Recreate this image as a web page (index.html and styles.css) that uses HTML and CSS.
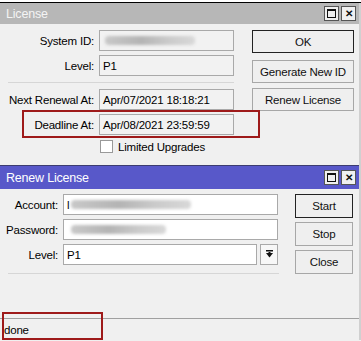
FILE: index.html
```html
<!DOCTYPE html>
<html lang="en">
<head>
    <meta charset="UTF-8">
    <title>License</title>
    <link rel="stylesheet" href="styles.css">
</head>
<body>
    <div class="behind"></div>

    <!-- License window (inactive) -->
    <div class="window">
        <div class="titlebar inactive">
            <span class="title">License</span>
            <span class="tb-buttons">
                <span class="tb-btn"><span class="max-ico"></span></span>
                <span class="tb-btn close-ico">&#x2715;</span>
            </span>
        </div>
        <div class="win-body lic-body">
            <div class="form">
                <div class="row">
                    <label>System ID:</label>
                    <div class="field ro blurred"><span class="blur w90"></span></div>
                </div>
                <div class="row">
                    <label>Level:</label>
                    <div class="field ro">P1</div>
                </div>
                <div class="divider"></div>
                <div class="row">
                    <label>Next Renewal At:</label>
                    <div class="field ro">Apr/07/2021 18:18:21</div>
                </div>
                <div class="row">
                    <label>Deadline At:</label>
                    <div class="field ro">Apr/08/2021 23:59:59</div>
                </div>
                <div class="row check-row">
                    <span class="checkbox"></span>
                    <span>Limited Upgrades</span>
                </div>
            </div>
            <div class="buttons lic-buttons">
                <button class="btn default">OK</button>
                <button class="btn">Generate New ID</button>
                <button class="btn">Renew License</button>
            </div>
            <div class="mark mark-deadline"></div>
        </div>
    </div>

    <!-- Renew License window (active) -->
    <div class="window renew">
        <div class="titlebar active">
            <span class="title">Renew License</span>
            <span class="tb-buttons">
                <span class="tb-btn"><span class="max-ico"></span></span>
                <span class="tb-btn close-ico">&#x2715;</span>
            </span>
        </div>
        <div class="win-body renew-body">
            <div class="form renew-form">
                <div class="row">
                    <label>Account:</label>
                    <div class="field">l<span class="blur w75"></span></div>
                </div>
                <div class="row">
                    <label>Password:</label>
                    <div class="field"><span class="blur w80"></span></div>
                </div>
                <div class="row">
                    <label>Level:</label>
                    <div class="select">
                        <div class="field">P1</div>
                        <span class="drop">
                            <svg width="9" height="9" viewBox="0 0 9 9">
                                <rect x="1" y="0" width="7" height="1.5" fill="#111"/>
                                <polygon points="1,3 8,3 4.5,7.5" fill="#111"/>
                                <rect x="3.5" y="2" width="2" height="3" fill="#111"/>
                            </svg>
                        </span>
                    </div>
                </div>
                <div class="divider"></div>
            </div>
            <div class="buttons renew-buttons">
                <button class="btn default">Start</button>
                <button class="btn">Stop</button>
                <button class="btn">Close</button>
            </div>
        </div>
        <div class="status">
            <span>done</span>
            <div class="mark mark-status"></div>
        </div>
    </div>
</body>
</html>
```

FILE: styles.css
```css
/* Styles */
body {
    margin: 0;
    padding: 0;
    width: 361px;
    height: 341px;
    overflow: hidden;
    background-color: #f0f0f0;
    font-family: "Liberation Sans", Arial, sans-serif;
    font-size: 11.5px;
    letter-spacing: -0.2px;
    color: #000;
}

.behind {
    height: 2px;
    background-color: #fff;
    border-bottom: 1px solid #000;
}

.window {
    position: relative;
    border-right: 2px solid #d0d0d0;
}

.titlebar {
    height: 21px;
    display: flex;
    align-items: center;
    justify-content: space-between;
    padding: 0 3px 0 6px;
}

.titlebar.inactive {
    background-color: #b7b7b7;
    color: #f4f4f4;
}

.titlebar.active {
    background-color: #5858c9;
    color: #fff;
    height: 23px;
    border-top: 1px solid #3c3c70;
}

.title {
    font-size: 12.5px;
}

.tb-buttons {
    display: flex;
    gap: 2px;
}

.tb-btn {
    width: 13px;
    height: 13px;
    border: 1px solid #555;
    background-color: #f0f0f0;
    color: #111;
    display: flex;
    align-items: center;
    justify-content: center;
    font-size: 10px;
    font-weight: bold;
    letter-spacing: 0;
}

.max-ico {
    width: 7px;
    height: 6px;
    border: 1px solid #111;
    border-top-width: 2px;
}

.win-body {
    display: flex;
    position: relative;
}

.lic-body {
    height: 141px;
    padding-top: 6px;
    box-sizing: border-box;
}

.form {
    width: 236px;
    display: flex;
    flex-direction: column;
    gap: 4px;
}

.row {
    display: flex;
    align-items: center;
    gap: 5px;
}

.row label {
    width: 94px;
    text-align: right;
}

.field {
    width: 135px;
    height: 21px;
    box-sizing: border-box;
    border: 1px solid #a9a9a9;
    background-color: #fff;
    padding: 0 3px;
    display: flex;
    align-items: center;
    white-space: nowrap;
    overflow: hidden;
}

.field.ro {
    background-color: #f2f2f2;
}

.blur {
    display: inline-block;
    height: 9px;
    border-radius: 4px;
    background: linear-gradient(90deg, #c8c8c8, #b4b4b4 40%, #cacaca 70%, #d8d8d8);
    filter: blur(1.5px);
}

.w90 { width: 90px; margin-left: 2px; }
.w75 { width: 120px; margin-left: 2px; }
.w80 { width: 95px; margin-left: 4px; }

.divider {
    height: 1px;
    background-color: #d6d6d6;
    margin: 2px 2px 2px 8px;
}

.check-row {
    padding-left: 100px;
    margin-top: 1px;
}

.checkbox {
    width: 11px;
    height: 11px;
    border: 1px solid #999;
    background-color: #fff;
}

.buttons {
    display: flex;
    flex-direction: column;
    margin-left: 16px;
}

.btn {
    font-family: "Liberation Sans", Arial, sans-serif;
    font-size: 11.5px;
    letter-spacing: -0.2px;
    background-color: #efefef;
    border: 1px solid #a7a7a7;
    margin: 0;
    padding: 0;
    color: #111;
}

.lic-buttons .btn {
    width: 102px;
    height: 23px;
    margin-bottom: 5px;
}

.lic-buttons .btn.default {
    margin-bottom: 7px;
}

.btn.default {
    border: 1px solid #222;
}

.mark {
    position: absolute;
    border: 2px solid #9e1a1a;
    box-sizing: border-box;
}

.mark-deadline {
    left: 22px;
    top: 86px;
    width: 238px;
    height: 28px;
}

.renew-body {
    height: 129px;
    padding-top: 5px;
    box-sizing: border-box;
}

.renew-form {
    width: 279px;
}

.renew-form .row label {
    width: 58px;
}

.renew-form .field {
    width: 215px;
}

.select {
    display: flex;
    gap: 3px;
}

.select .field {
    width: 194px;
}

.drop {
    width: 18px;
    height: 21px;
    box-sizing: border-box;
    border: 1px solid #a9a9a9;
    background-color: #f7f7f7;
    display: flex;
    align-items: center;
    justify-content: center;
}

.renew-form .divider {
    margin: 4px 0 0 8px;
}

.renew-buttons {
    margin-left: 16px;
    gap: 4px;
}

.renew-buttons .btn {
    width: 58px;
    height: 24px;
}

.status {
    position: relative;
    height: 21px;
    border-top: 1px solid #a0a0a0;
    padding-left: 4px;
    display: flex;
    align-items: center;
}

.mark-status {
    left: 2px;
    top: -7px;
    width: 101px;
    height: 28px;
}
```
